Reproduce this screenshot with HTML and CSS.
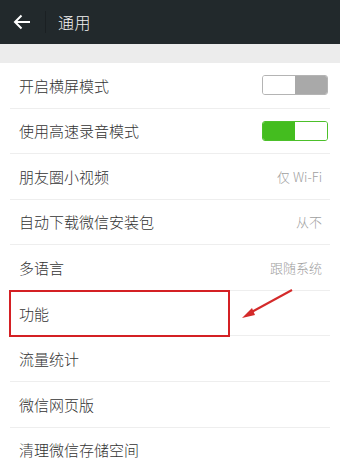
FILE: index.html
```html
<!DOCTYPE html>
<html lang="zh">
<head>
<meta charset="utf-8">
<link rel="stylesheet" href="styles.css">
</head>
<body>
<div class="page">
  <header class="bar">
    <span class="back">
      <svg width="18" height="16" viewBox="0 0 18 16"><path d="M17 8H2M8.5 1.5L2 8l6.5 6.5" fill="none" stroke="#fff" stroke-width="2"/></svg>
    </span>
    <span class="sep"></span>
    <span class="title">通用</span>
  </header>
  <div class="gap"></div>
  <ul class="list">
    <li class="row"><span class="label">开启横屏模式</span><span class="toggle off"><i></i><i></i></span></li>
    <li class="row"><span class="label">使用高速录音模式</span><span class="toggle on"><i></i><i></i></span></li>
    <li class="row"><span class="label">朋友圈小视频</span><span class="value">仅 Wi-Fi</span></li>
    <li class="row"><span class="label">自动下载微信安装包</span><span class="value">从不</span></li>
    <li class="row"><span class="label">多语言</span><span class="value">跟随系统</span></li>
    <li class="row mark"><span class="label">功能</span><span class="box"></span>
      <svg class="arrow" width="60" height="40" viewBox="0 0 60 40"><path d="M53 2L9 26" stroke="#d42a2a" stroke-width="2"/><path d="M3 30L13 20L16 27Z" fill="#d42a2a"/></svg>
    </li>
    <li class="row"><span class="label">流量统计</span></li>
    <li class="row"><span class="label">微信网页版</span></li>
    <li class="row"><span class="label">清理微信存储空间</span></li>
  </ul>
</div>
</body>
</html>
```
FILE: styles.css
```css
html, body { margin: 0; padding: 0; }
body { width: 340px; height: 468px; overflow: hidden; background: #fff;
  font-family: "Noto Sans CJK SC", "Noto Sans", sans-serif; }
.page { display: flex; flex-direction: column; }
.bar { height: 44px; background: #22292c; display: flex; align-items: center; }
.back { width: 45px; display: flex; justify-content: center; }
.back svg { display: block; margin-left: -2px; }
.sep { width: 1px; height: 22px; background: #1b2023; }
.title { color: #f2f2f2; font-size: 16px; font-weight: 300; margin-left: 12px; letter-spacing: 0.5px; }
.gap { height: 19px; background: #ececec; }
.list { list-style: none; margin: 0; padding: 0 10px; }
.row { height: 44.57px; border-bottom: 1px solid #eeeeee; display: flex; align-items: center;
  justify-content: space-between; padding: 0 8px 0 9px; position: relative; }
.label { font-size: 15px; font-weight: 300; color: #333333; }
.value { font-size: 13px; font-weight: 300; color: #a0a0a0; }
.toggle { display: flex; width: 66px; height: 20px; border-radius: 3px; overflow: hidden;
  box-sizing: border-box; margin-right: -6px; }
.toggle i { flex: 1; }
.toggle.off { border: 1px solid #b4b4b4; }
.toggle.off i:first-child { background: #fff; }
.toggle.off i:last-child { background: #a9a9a9; }
.toggle.on { border: 1px solid #4cc02a; }
.toggle.on i:first-child { background: #44bd1f; }
.toggle.on i:last-child { background: #fff; }
.box { position: absolute; left: -1px; top: -1px; width: 221px; height: 47px;
  border: 2.5px solid #d42024; box-sizing: border-box; }
.arrow { position: absolute; left: 229px; top: -3px; }
```
